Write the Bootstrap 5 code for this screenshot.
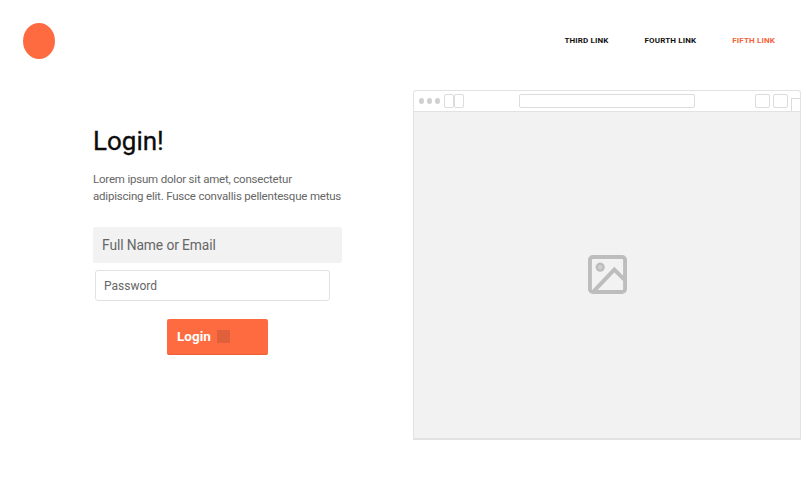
<!doctype html>
<html lang="en">
<head>
<meta charset="utf-8">
<title>Login</title>
<link href="https://cdn.jsdelivr.net/npm/bootstrap@5.3.0/dist/css/bootstrap.min.css" rel="stylesheet">
<style>
html,body{height:504px;overflow:hidden}
body{background:#fff;font-family:Roboto,"Noto Sans","Liberation Sans",sans-serif;color:#6c6c6c}
.top-bar{height:82px;padding:0 31px 0 23px}
.logo-dot{width:32px;height:36px;border-radius:50%;background:#ff6b41}
.top-link{font-size:8px;font-weight:700;color:#111;text-decoration:none;text-transform:uppercase;letter-spacing:.15px}
.top-link.now{color:#f4623a}
.top-links{gap:36px}
.stage{padding-top:8px}
.left-pane{width:413px;padding:35px 64px 0 93px;flex:none}
.head-line{font-size:26px;font-weight:400;color:#0c0c0c;line-height:32px;margin:0 0 14px;-webkit-text-stroke:.3px #0c0c0c}
.intro{font-size:11.500px;letter-spacing:-.2px;line-height:17px;margin:0 0 22px;color:#666;white-space:nowrap}
.field-a.form-control{height:36px;width:249px;background:#f2f2f2;border:0;border-radius:2px;padding:0 9px;font-size:13.800px;letter-spacing:-.1px}
.field-a::placeholder{color:#666}
.field-b.form-control{height:31px;width:235px;margin:7px 0 0 1.500px;border:1px solid #e2e2e2;border-radius:3px;padding:0 8.500px;font-family:Roboto,sans-serif;font-size:12px}
.field-b::placeholder{color:#666}
.go-row{margin-top:18px;width:249px}
.go-btn.btn{width:101px;height:36px;background:#ff6b41;border:0;border-bottom:1px solid #e85f38;border-radius:2px;padding:0 0 0 10px;color:#fff;font-size:13.500px;font-weight:700;gap:6px}
.go-mark{width:13px;height:13px;background:#e0603c}
.frame{width:388px;height:350px;flex:none;background:#f2f2f2;border:1px solid #e2e2e2;border-bottom-width:2px;border-radius:3px 3px 0 0}
.frame-bar{height:21px;background:#fff;border-bottom:1px solid #e2e2e2;padding:0 0 0 5px;border-radius:3px 3px 0 0}
.pip{width:5px;height:6px;border-radius:50%;background:#d0d0d0;margin-right:3px}
.box{height:14px;border:1px solid #dcdcdc;border-radius:2px;background:#fff}
.box-s{width:10px}
.box-first{margin-left:1px}
.box-url{width:176px;margin-left:55px}
.box-m{width:15px}
.box-next{margin-left:3px}
.tab-edge{width:9px;height:13px;border:1px solid #dcdcdc;border-width:1px 0 0 1px;align-self:flex-end;margin-left:3px}
.frame-body{height:327px}
.pic-icon{margin-bottom:2px}
</style>
</head>
<body>
<header class="top-bar d-flex align-items-center justify-content-between">
  <div class="logo-dot"></div>
  <nav class="top-links d-flex">
    <a class="top-link" href="#">Third Link</a>
    <a class="top-link" href="#">Fourth Link</a>
    <a class="top-link now" href="#">Fifth Link</a>
  </nav>
</header>
<main class="stage d-flex">
  <section class="left-pane">
    <h1 class="head-line">Login!</h1>
    <p class="intro">Lorem ipsum dolor sit amet, consectetur<br>adipiscing elit. Fusce convallis pellentesque metus</p>
    <form>
      <input class="form-control field-a" type="text" placeholder="Full Name or Email">
      <input class="form-control field-b" type="password" placeholder="Password">
      <div class="go-row d-flex justify-content-center">
        <button class="btn go-btn d-flex align-items-center" type="button">Login <span class="go-mark"></span></button>
      </div>
    </form>
  </section>
  <section class="frame">
    <div class="frame-bar d-flex align-items-center">
      <span class="pip"></span><span class="pip"></span><span class="pip"></span>
      <span class="box box-s box-first"></span><span class="box box-s"></span>
      <span class="box box-url"></span>
      <span class="box box-m ms-auto"></span><span class="box box-m box-next"></span>
      <span class="tab-edge"></span>
    </div>
    <div class="frame-body d-flex align-items-center justify-content-center">
      <svg class="pic-icon" width="39" height="39" viewBox="0 0 40 40" fill="none" stroke="#bdbdbd" stroke-width="4" aria-hidden="true">
        <rect x="2" y="2" width="36" height="36" rx="3"/>
        <circle cx="12.500" cy="12.500" r="3.500" fill="#cfcfcf" stroke-width="2.500"/>
        <path d="M6 37 27 15 37 25"/>
      </svg>
    </div>
  </section>
</main>
<script src="https://cdn.jsdelivr.net/npm/bootstrap@5.3.0/dist/js/bootstrap.bundle.min.js"></script>
</body>
</html>
